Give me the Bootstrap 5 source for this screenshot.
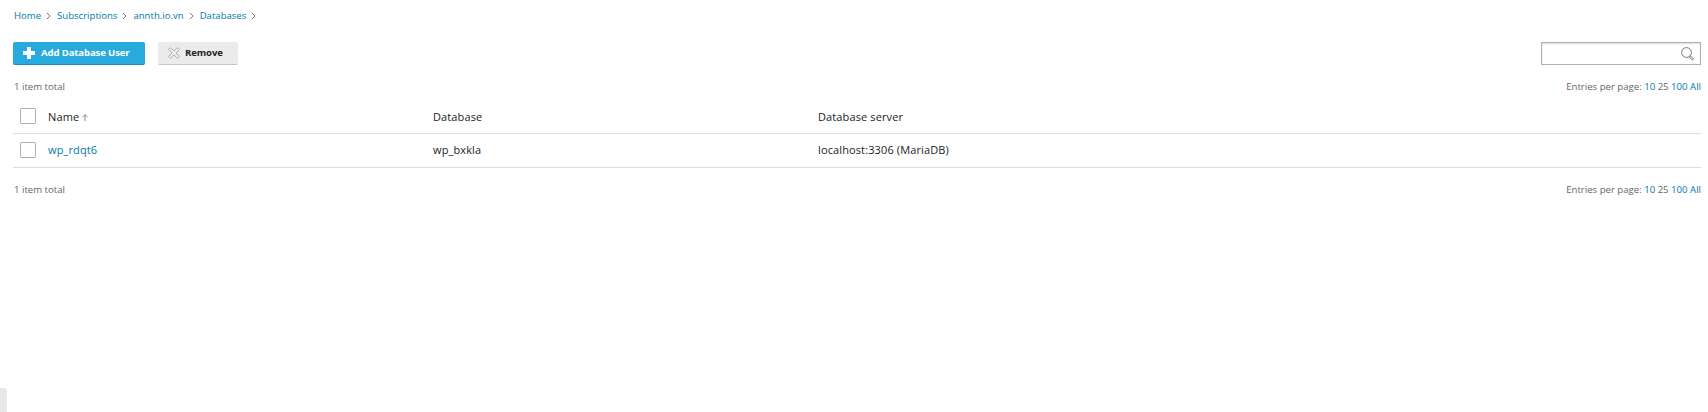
<!DOCTYPE html>
<html lang="en">
<head>
<meta charset="utf-8">
<title>Databases</title>
<link href="https://cdn.jsdelivr.net/npm/bootstrap@5.3.0/dist/css/bootstrap.min.css" rel="stylesheet">
<style>
body{font:11px/16px "Open Sans","Noto Sans",sans-serif;letter-spacing:.12px;color:#1c1c1c;background:#fff;height:412px;overflow:hidden}
a{color:#0079a8;text-decoration:none}
.page{padding:0 7px 0 13px}
.crumbs{height:42px;padding-top:8px;font-size:9.6px;letter-spacing:-.01px;padding-left:1px}
.crumbs svg{margin:1px 5px 0 5px}
.tool{height:23px;border:0;border-bottom:1px solid #c4c4c4;border-radius:2px;background:#ebebeb;font-size:9.6px;letter-spacing:-.03px;line-height:20px;font-weight:700;color:#222;padding:0 0 1px 10px}
.tool-add{width:132px;background:#28aade;border-color:#1e8fbd;color:#fff;margin-right:13px}
.tool-add span{margin-left:6px;letter-spacing:-.14px}
.tool-remove{width:80px}
.tool-remove span{margin-left:5px;letter-spacing:-.1px}
.find{width:160px;height:23px;border:1px solid #b0b0b0;box-shadow:inset 0 1px 2px #0002;padding-right:6px}
.totals{font-size:9.6px;letter-spacing:0;color:#666;height:16px;padding-left:1px}
.totals-top{margin-top:14px}
.totals-bottom{margin-top:14px}
.grid-row{height:34px;border-bottom:1px solid #ddd}
.box{width:16px;height:16px;border:1px solid #b0b0b0;border-radius:1px;margin:0 12px 1px 7px;appearance:none;background:#fff}
.grid-row + .grid-row{padding-bottom:1px}
.entries{padding-top:5px}
.col-data{width:385px}
.handle{left:0;bottom:0;width:7px;height:24px;background:#e8e8e8;border-radius:0 3px 0 0}
</style>
<script src="https://cdn.jsdelivr.net/npm/bootstrap@5.3.0/dist/js/bootstrap.bundle.min.js"></script>
</head>
<body>
<main class="page">
<nav class="crumbs d-flex align-items-start">
<a href="#">Home</a><svg width="6" height="14" viewBox="0 0 6 14"><path d="M1 4 4 7 1 10" fill="none" stroke="#777"/></svg>
<a href="#">Subscriptions</a><svg width="6" height="14" viewBox="0 0 6 14"><path d="M1 4 4 7 1 10" fill="none" stroke="#777"/></svg>
<a href="#">annth.io.vn</a><svg width="6" height="14" viewBox="0 0 6 14"><path d="M1 4 4 7 1 10" fill="none" stroke="#777"/></svg>
<a href="#">Databases</a><svg width="6" height="14" viewBox="0 0 6 14"><path d="M1 4 4 7 1 10" fill="none" stroke="#777"/></svg>
</nav>
<div class="d-flex">
<button class="tool tool-add d-flex align-items-center"><svg width="12" height="12" viewBox="0 0 12 12"><path d="M4 0h4v4h4v4H8v4H4V8H0V4h4z" fill="#fff"/></svg><span>Add Database User</span></button>
<button class="tool tool-remove d-flex align-items-center"><svg width="12" height="12" viewBox="0 0 12 12"><path d="M2.500.6 6 4.100 9.500.6l1.900 1.900L7.900 6l3.500 3.500-1.900 1.900L6 7.900l-3.500 3.500L.6 9.500 4.100 6 .6 2.500z" fill="#eee" stroke="#aaa"/></svg><span>Remove</span></button>
<div class="find d-flex align-items-center justify-content-end ms-auto"><svg width="13" height="14" viewBox="0 0 13 14" fill="none" stroke="#777"><circle cx="5.500" cy="5.500" r="4.900"/><path d="m8.300 10 1.200-1.200 3 3.100-1.200 1.200z"/></svg></div>
</div>
<div class="totals totals-top d-flex justify-content-between"><span>1 item total</span><span>Entries per page: <a href="#">10</a> 25 <a href="#">100</a> <a href="#">All</a></span></div>
<section class="entries">
<div class="grid-row d-flex align-items-center"><input type="checkbox" class="box"><div class="col-data">Name <svg width="6" height="7" viewBox="0 0 6 7"><path d="M3 7V1M.5 3 3 .700 5.500 3" fill="none" stroke="#888"/></svg></div><div class="col-data">Database</div><div>Database server</div></div>
<div class="grid-row d-flex align-items-center"><input type="checkbox" class="box"><div class="col-data"><a href="#">wp_rdqt6</a></div><div class="col-data">wp_bxkla</div><div>localhost:3306 (MariaDB)</div></div>
</section>
<div class="totals totals-bottom d-flex justify-content-between"><span>1 item total</span><span>Entries per page: <a href="#">10</a> 25 <a href="#">100</a> <a href="#">All</a></span></div>
</main>
<div class="handle position-absolute"></div>
</body>
</html>
